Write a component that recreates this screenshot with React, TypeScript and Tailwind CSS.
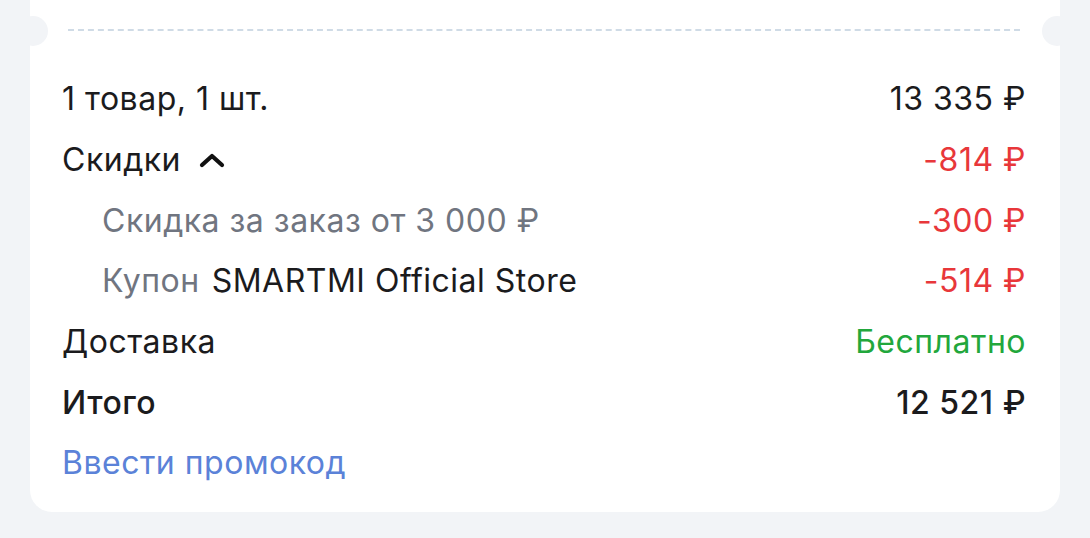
import React from "react";

const Row = ({ left, right, className = "" }: { left: React.ReactNode; right?: React.ReactNode; className?: string }) => (
  <div className={`flex items-center justify-between h-[60.67px] ${className}`}>
    <div className="flex items-center">{left}</div>
    {right !== undefined && <div>{right}</div>}
  </div>
);

export default function App() {
  return (
    <div
      className="w-[1090px] h-[538px] bg-[#f2f4f7] overflow-hidden"
      style={{ fontFamily: "Inter, 'Noto Sans', sans-serif" }}
    >
      <div className="ml-[30px] w-[1030px] h-[512px] bg-white rounded-b-[22px] relative">
        <div className="absolute left-[-12px] top-[16px] w-[30px] h-[30px] rounded-full bg-[#f2f4f7]" />
        <div className="absolute right-[-12px] top-[16px] w-[30px] h-[30px] rounded-full bg-[#f2f4f7]" />
        <div className="h-[31px] flex items-end pl-[38px] pr-[40px]">
          <div className="w-full border-t-[2px] border-dashed border-[#cfdbe6]" />
        </div>
        <div className="pt-[38px] pl-[32px] pr-[34px] text-[32px] text-[#1b1b1d] tracking-[0.5px]">
          <Row left={<span>1 товар, 1 шт.</span>} right={<span>13 335 ₽</span>} />
          <Row
            left={
              <>
                <span>Скидки</span>
                <svg className="ml-[18px]" width="26" height="16" viewBox="0 0 26 16" fill="none">
                  <path d="M3 13 L13 4 L23 13" stroke="#111" strokeWidth="4.2" strokeLinecap="round" strokeLinejoin="round" />
                </svg>
              </>
            }
            right={<span className="text-[#e8373a]">-814 ₽</span>}
          />
          <Row
            className="pl-[40px]"
            left={<span className="text-[#707580]">Скидка за заказ от 3 000 ₽</span>}
            right={<span className="text-[#e8373a]">-300 ₽</span>}
          />
          <Row
            className="pl-[40px]"
            left={
              <>
                <span className="text-[#707580]">Купон</span>
                <span className="ml-[12px]">SMARTMI Official Store</span>
              </>
            }
            right={<span className="text-[#e8373a]">-514 ₽</span>}
          />
          <Row left={<span>Доставка</span>} right={<span className="text-[#22a73c]">Бесплатно</span>} />
          <Row
            left={<span className="font-medium">Итого</span>}
            right={<span className="font-medium">12 521 ₽</span>}
          />
          <Row left={<span className="text-[#5b82d8]">Ввести промокод</span>} />
        </div>
      </div>
    </div>
  );
}
